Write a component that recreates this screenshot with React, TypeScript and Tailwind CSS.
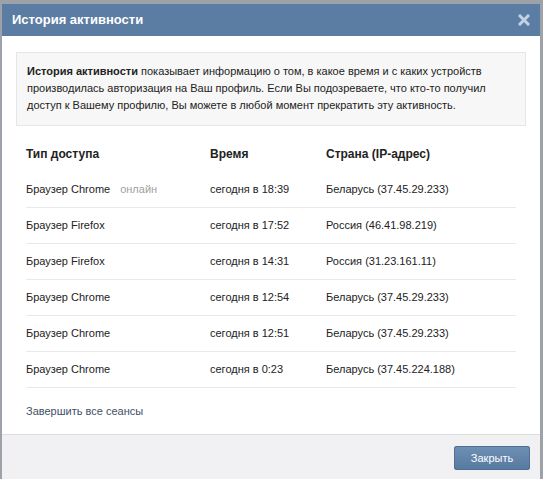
const sessions = [
  { device: "Браузер Chrome", online: true, time: "сегодня в 18:39", place: "Беларусь (37.45.29.233)" },
  { device: "Браузер Firefox", time: "сегодня в 17:52", place: "Россия (46.41.98.219)" },
  { device: "Браузер Firefox", time: "сегодня в 14:31", place: "Россия (31.23.161.11)" },
  { device: "Браузер Chrome", time: "сегодня в 12:54", place: "Беларусь (37.45.29.233)" },
  { device: "Браузер Chrome", time: "сегодня в 12:51", place: "Беларусь (37.45.29.233)" },
  { device: "Браузер Chrome", time: "сегодня в 0:23", place: "Беларусь (37.45.224.188)" },
];

export default function App() {
  return (
    <div className="w-[543px] h-[479px] overflow-hidden bg-[#9da2a8] pt-[4px] pl-[2px] pr-[3px] font-['Liberation_Sans',Arial,sans-serif]">
      <div className="flex flex-col h-full bg-white">
        {/* title bar */}
        <div className="flex items-center justify-between h-[33px] bg-[#5b7ca3] pl-[10px] pr-[8px]">
          <div className="text-[13px] font-bold text-white">История активности</div>
          <svg width="12" height="12" viewBox="0 0 12 12" className="mr-[2px]">
            <path d="M2 2 L10 10 M10 2 L2 10" stroke="#c3d2e3" strokeWidth="3" strokeLinecap="square" />
          </svg>
        </div>

        {/* body */}
        <div className="flex-1 px-[14px] pt-[16px] text-[11px] text-[#222]">
          <div className="border border-[#e4e6e9] bg-[#f7f7f7] pl-[10px] pr-[8px] pt-[10px] pb-[11px] leading-[17px]">
            <b>История активности</b> показывает информацию о том, в какое время и с каких устройств
            производилась авторизация на Ваш профиль. Если Вы подозреваете, что кто-то получил доступ
            к Вашему профилю, Вы можете в любой момент прекратить эту активность.
          </div>

          <div className="ml-[10px] mr-[10px] mt-[10px]">
            <div className="flex items-center h-[36px] font-bold text-[12px]">
              <div className="w-[184px]">Тип доступа</div>
              <div className="w-[116px]">Время</div>
              <div>Страна (IP-адрес)</div>
            </div>
            {sessions.map((s, i) => (
              <div key={i} className="flex items-center h-[36px] border-b border-[#e8e9ec]">
                <div className="w-[184px]">
                  {s.device}
                  {s.online && <span className="ml-[10px] text-[#a0a0a0]">онлайн</span>}
                </div>
                <div className="w-[116px]">{s.time}</div>
                <div>{s.place}</div>
              </div>
            ))}
            <div className="h-[46px] flex items-center text-[#3e4f66]">Завершить все сеансы</div>
          </div>
        </div>

        {/* footer */}
        <div className="h-[46px] border-t border-[#dcdde0] bg-[#f1f1f3] flex justify-end items-start pt-[11px] pr-[10px]">
          <button className="w-[76px] h-[24px] rounded-[2px] border border-[#4f6f94] bg-gradient-to-b from-[#6e8fb4] to-[#587aa0] text-white text-[11px]">
            Закрыть
          </button>
        </div>
      </div>
    </div>
  );
}
